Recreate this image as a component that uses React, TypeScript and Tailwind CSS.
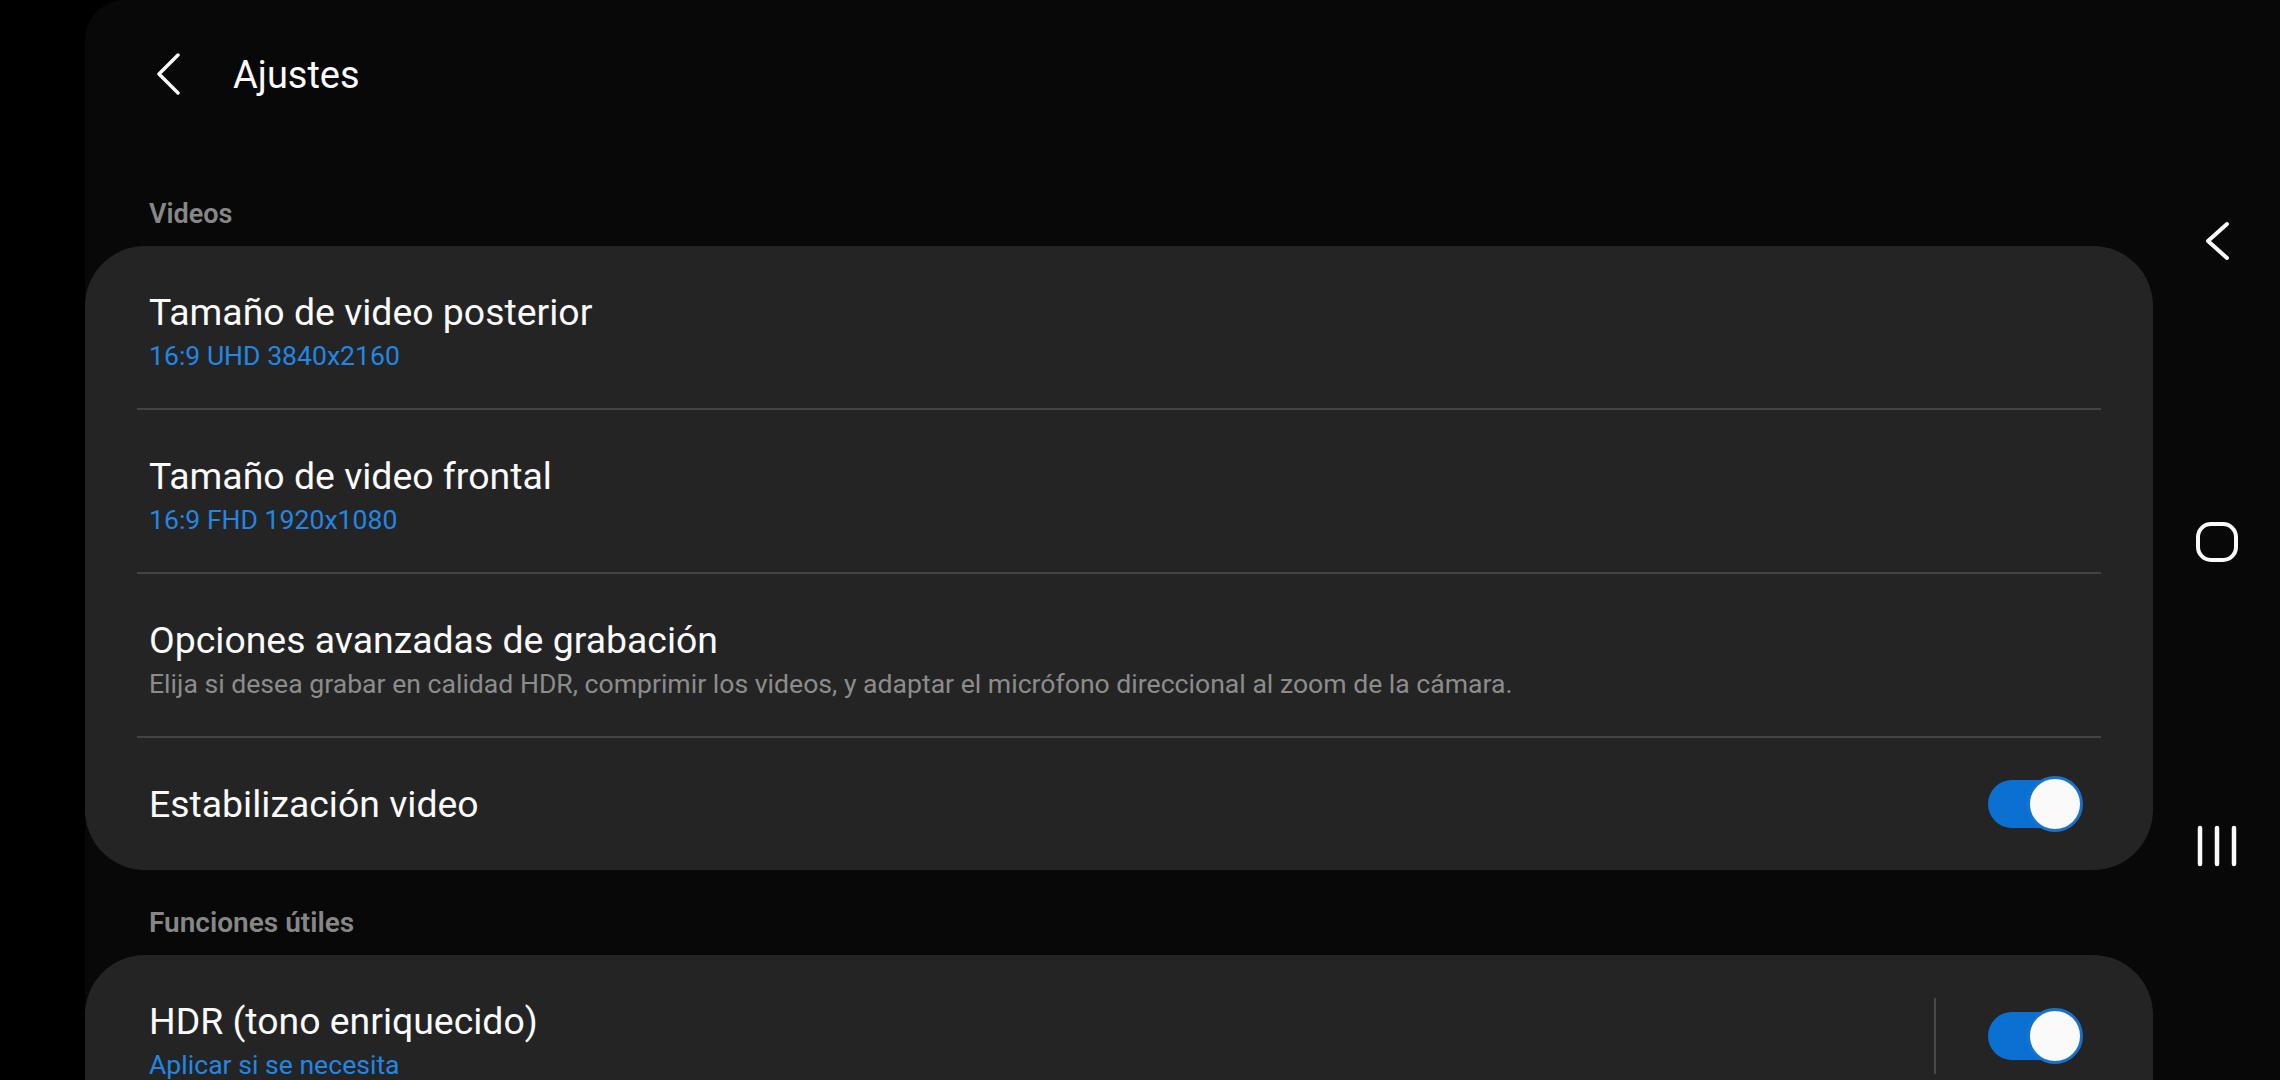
import React from "react";

const font = { fontFamily: "Roboto, 'Noto Sans', sans-serif" };

function Toggle() {
  return (
    <div className="relative w-[95px] h-[56px] shrink-0">
      <div className="absolute left-0 top-[4px] w-[88px] h-[48px] rounded-full bg-[#0a71d2]" />
      <div className="absolute right-0 top-0 w-[56px] h-[56px] rounded-full bg-[#fafafa] border-[3px] border-[#1673cd]" />
    </div>
  );
}

function Row({ title, sub, subBlue, toggle, last }: { title: string; sub?: string; subBlue?: boolean; toggle?: boolean; last?: boolean }) {
  return (
    <div className={`flex items-center justify-between pl-[64px] pr-[70px] ${last ? "h-[132px]" : "h-[162px]"}`}>
      <div className={`flex flex-col ${sub ? "pt-[8px]" : ""}`}>
        <span className="text-[37.4px] leading-[44px] text-[#fafafa]">{title}</span>
        {sub && (
          <span className={`mt-[6px] text-[26.6px] leading-[32px] ${subBlue ? "text-[#2386e2]" : "text-[#8c8c8c]"}`}>{sub}</span>
        )}
      </div>
      {toggle && <Toggle />}
    </div>
  );
}

const Divider = () => <div className="mx-[52px] h-[2px] bg-[#444444]" />;

function SectionTitle({ children, top, size }: { children: React.ReactNode; top: string; size: string }) {
  return (
    <div className={`shrink-0 ${top} ${size} pb-[15px] pl-[64px] leading-[34px] font-semibold text-[#878787]`}>
      {children}
    </div>
  );
}

export default function App() {
  return (
    <div className="w-[2280px] h-[1080px] bg-black flex overflow-hidden" style={font}>
      <div className="w-[85px] shrink-0 bg-black" />
      <div className="flex-1 flex bg-[#080808] rounded-tl-[40px]">
        {/* settings list */}
        <div className="w-[2068px] shrink-0 flex flex-col">
          <div className="shrink-0 h-[148px] flex items-center pl-[70px]">
            <svg width="26" height="42" viewBox="0 0 26 42" fill="none">
              <path d="M23 2 L4 21 L23 40" stroke="#fafafa" strokeWidth="3.5" strokeLinecap="round" strokeLinejoin="round" />
            </svg>
            <span className="ml-[52px] pt-[2px] text-[38px] leading-[48px] text-[#fafafa]">Ajustes</span>
          </div>

          <SectionTitle top="pt-[49px]" size="text-[27px]">Videos</SectionTitle>
          <div className="shrink-0 rounded-[60px] bg-[#242424]">
            <Row title="Tamaño de video posterior" sub="16:9 UHD 3840x2160" subBlue />
            <Divider />
            <Row title="Tamaño de video frontal" sub="16:9 FHD 1920x1080" subBlue />
            <Divider />
            <Row
              title="Opciones avanzadas de grabación"
              sub="Elija si desea grabar en calidad HDR, comprimir los videos, y adaptar el micrófono direccional al zoom de la cámara."
            />
            <Divider />
            <Row title="Estabilización video" toggle last />
          </div>

          <SectionTitle top="pt-[36px]" size="text-[28px]">Funciones útiles</SectionTitle>
          <div className="shrink-0 rounded-t-[60px] bg-[#242424] h-[200px]">
            <div className="flex items-center justify-between h-[162px] pl-[64px] pr-[70px]">
              <div className="flex flex-col pt-[8px]">
                <span className="text-[37.4px] leading-[44px] text-[#fafafa]">HDR (tono enriquecido)</span>
                <span className="mt-[6px] text-[26.6px] leading-[32px] text-[#2386e2]">Aplicar si se necesita</span>
              </div>
              <div className="flex items-center gap-[52px]">
                <div className="w-[2px] h-[76px] bg-[#4a4a4a]" />
                <Toggle />
              </div>
            </div>
          </div>
        </div>

        {/* navigation bar */}
        <div className="flex-1 flex flex-col items-center pt-[221px]">
          <svg className="shrink-0" width="26" height="40" viewBox="0 0 26 40" fill="none">
            <path d="M23 3 L4 20 L23 37" stroke="#fafafa" strokeWidth="4" strokeLinecap="round" strokeLinejoin="round" />
          </svg>
          <svg className="shrink-0 mt-[260px]" width="44" height="42" viewBox="0 0 44 42" fill="none">
            <rect x="3" y="3" width="38" height="36" rx="13" stroke="#fafafa" strokeWidth="4" />
          </svg>
          <svg className="shrink-0 mt-[262px]" width="42" height="42" viewBox="0 0 42 42" fill="none">
            <path d="M4 3 V39 M21 3 V39 M38 3 V39" stroke="#fafafa" strokeWidth="4.5" strokeLinecap="round" />
          </svg>
        </div>
      </div>
    </div>
  );
}
